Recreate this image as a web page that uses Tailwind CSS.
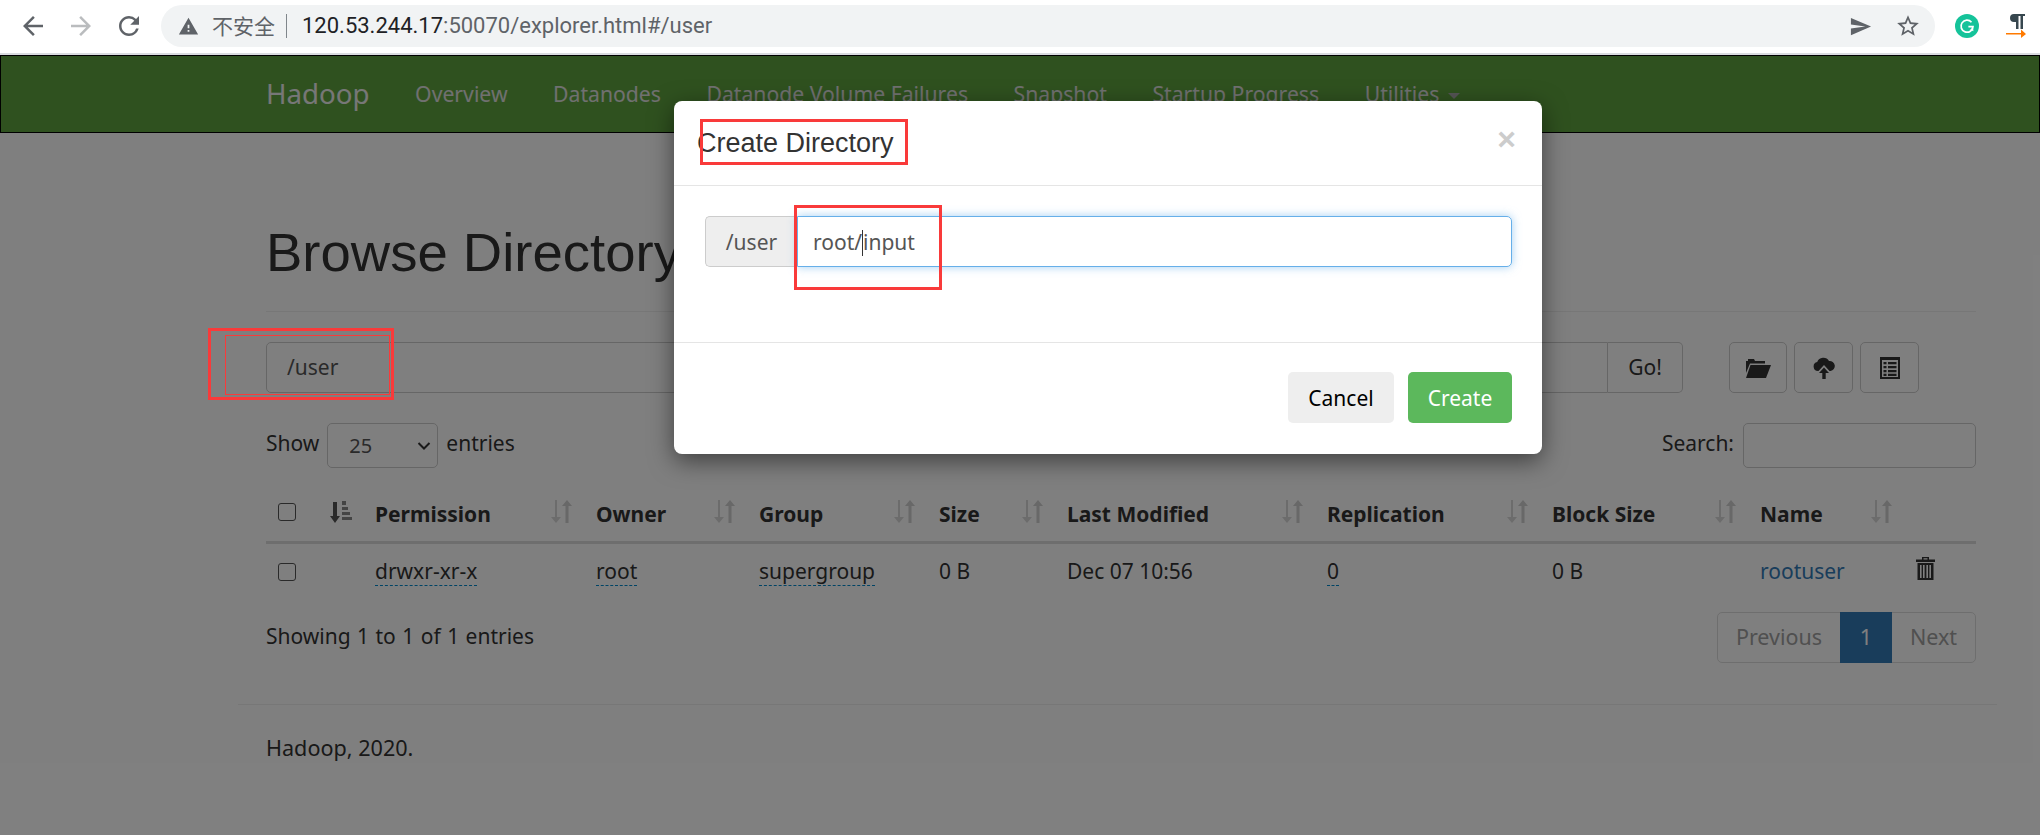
<!DOCTYPE html>
<html lang="en">
  <head>
    <meta charset="UTF-8" />
    <title>Browse Directory</title>
    <script src="https://cdn.jsdelivr.net/npm/@tailwindcss/browser@4"></script>
  </head>
  <body class="bg-white">
    <div class="relative w-[2040px] h-[835px] overflow-hidden font-['Noto_Sans','Noto_Sans_CJK_SC',sans-serif] text-[21px] text-[#333]">
      <!-- browser bar -->
      <div class="h-[55px] bg-white border-b-2 border-[#dadce0] flex items-start pt-[5px]">
        <svg class="w-[30px] h-[30px] ml-[18px] mt-[6px]" viewBox="0 0 24 24" fill="#5f6368"><path d="M20 11H7.83l5.59-5.59L12 4l-8 8 8 8 1.41-1.41L7.83 13H20v-2z"/></svg>
        <svg class="w-[30px] h-[30px] ml-[18px] mt-[6px]" viewBox="0 0 24 24" fill="#babcbe"><path d="M4 11h12.170l-5.590-5.590L12 4l8 8-8 8-1.410-1.410L16.170 13H4v-2z"/></svg>
        <svg class="w-[30px] h-[30px] ml-[18px] mt-[6px]" viewBox="0 0 24 24" fill="#5f6368"><path d="M17.65 6.35A7.958 7.958 0 0 0 12 4c-4.42 0-7.99 3.58-7.99 8s3.57 8 7.99 8c3.73 0 6.84-2.55 7.73-6h-2.08A5.99 5.99 0 0 1 12 18c-3.31 0-6-2.69-6-6s2.69-6 6-6c1.66 0 3.14.69 4.22 1.78L13 11h7V4l-2.35 2.35z"/></svg>
        <div class="ml-[17px] w-[1774px] h-[42px] rounded-full bg-[#f1f3f4] flex items-center pl-[17px]">
          <svg class="w-[21px] h-[21px]" viewBox="0 0 24 24" fill="#5f6368"><path d="M1 21h22L12 2 1 21zm12-3h-2v-2h2v2zm0-4h-2v-4h2v4z"/></svg>
          <span class="ml-[13px] text-[#5f6368] text-[21px] leading-none">不安全</span>
          <span class="ml-[11px] w-px h-[24px] bg-[#80868b]"></span>
          <span class="ml-[15px] text-[22px] leading-none font-['Roboto',sans-serif] text-[#202124]">120.53.244.17<span class="text-[#5f6368]">:50070/explorer.html#/user</span></span>
          <svg class="w-[23px] h-[23px] ml-auto" viewBox="0 0 24 24" fill="#5f6368"><path d="M2.01 21L23 12 2.01 3 2 10l15 2-15 2z"/></svg>
          <svg class="w-[26px] h-[26px] ml-[23px] mr-[14px]" viewBox="0 0 24 24" fill="#5f6368"><path d="M22 9.24l-7.19-.62L12 2 9.19 8.63 2 9.24l5.46 4.73L5.82 21 12 17.27 18.18 21l-1.63-7.03L22 9.24zM12 15.4l-3.76 2.27 1-4.28-3.32-2.88 4.38-.38L12 6.1l1.71 4.04 4.38.38-3.32 2.88 1 4.28L12 15.4z"/></svg>
        </div>
        <svg class="w-[24px] h-[24px] ml-[20px] mt-[9px]" viewBox="0 0 24 24"><circle cx="12" cy="12" r="12" fill="#15c39a"/><path d="M16.5 8.2A6 6 0 1 0 18 12.6h-4.6" fill="none" stroke="#fff" stroke-width="1.7"/><path d="M18.4 17.2l-.3-3.6-3 1.9z" fill="#fff"/></svg>
        <svg class="w-[20px] h-[24px] ml-[27px] mt-[9px]" viewBox="0 0 20 24"><path d="M8 0h11v2h-2v13h-2.500V2h-2v13H10V8H8a4 4 0 0 1 0-8z" fill="#37474f"/><path d="M0 19h15v-3.500l5 4.500-5 4v-3.500H0z" fill="#ff7a00"/></svg>
      </div>

      <!-- page below the browser bar -->
      <div class="relative h-[780px]">
        <nav class="h-[78px] bg-[#5fa33e] border border-black flex items-center pl-[265px] gap-[45.5px] text-[#e0e0e0] text-[21.2px]">
          <span class="text-[27.7px] text-[#eee]">Hadoop</span>
          <span>Overview</span>
          <span>Datanodes</span>
          <span>Datanode Volume Failures</span>
          <span>Snapshot</span>
          <span>Startup Progress</span>
          <span class="flex items-center gap-[9px]">Utilities<span class="mt-[4px] w-0 h-0 border-x-[6px] border-x-transparent border-t-[6px] border-t-[#aaa]"></span></span>
        </nav>

        <main class="w-[1759px] ml-[238px]">
          <div class="pl-[28px] pr-[21px]">
            <div class="mt-[80px] pb-[18px] border-b border-[#eee]">
              <h1 class="h-[80px] leading-[80px] text-[54.5px] font-['Liberation_Sans',sans-serif] whitespace-nowrap">Browse Directory</h1>
            </div>

            <div class="mt-[30px] flex items-start pr-[57px]">
              <div class="flex-1 h-[51px] border border-[#ccc] rounded-l-[5px] flex items-center pl-[20px] text-[#555]">
                <span class="w-[155px]">/user</span>
              </div>
              <div class="w-[75px] h-[51px] border border-l-0 border-[#ccc] rounded-r-[5px] flex items-center justify-center">Go!</div>
              <div class="ml-[46px] flex gap-[7px]">
                <div class="w-[58px] h-[51px] border border-[#ccc] rounded-[5px] flex items-center justify-center">
                  <svg class="w-[26px] h-[20px]" viewBox="0 0 26 20" fill="#333"><path d="M1 3h2V1h6l1 2h10v2.500H5L1 15z"/><path d="M5.500 7H26l-5 13H1z"/></svg>
                </div>
                <div class="w-[59px] h-[51px] border border-[#ccc] rounded-[5px] flex items-center justify-center">
                  <svg class="w-[22px] h-[22px]" viewBox="0 0 22 22" fill="#333"><path d="M5 14a4.500 4.500 0 0 1-.8-8.900A6.500 6.500 0 0 1 16 4a5 5 0 0 1 1.500 10h-1l-5.500-6-5.500 6z"/><path d="M11 10.500l5 5.500h-3.300v6H9.300v-6H6z"/></svg>
                </div>
                <div class="w-[59px] h-[51px] border border-[#ccc] rounded-[5px] flex items-center justify-center">
                  <svg class="w-[20px] h-[22px]" viewBox="0 0 20 22"><path d="M0 0h20v22H0z" fill="#333"/><path d="M2 3h16v17H2z" fill="#fff"/><path d="M3.500 5h3v2.200h-3zM8 5h8.500v2.200H8zM3.500 9h3v2.200h-3zM8 9h8.500v2.200H8zM3.500 13h3v2.200h-3zM8 13h8.500v2.200H8zM3.500 16.800h3V19h-3zM8 16.800h8.500V19H8z" fill="#333"/></svg>
                </div>
              </div>
            </div>

            <div class="mt-[30px] h-[45px] flex items-center">
              <span class="pb-[3px]">Show</span>
              <div class="ml-[8px] w-[111px] h-[45px] border border-[#ccc] rounded-[5px] flex items-center justify-between pl-[21px] pr-[6px] text-[#555]">
                <span class="text-[20px]">25</span>
                <svg class="w-[14px] h-[10px]" viewBox="0 0 14 10" fill="none" stroke="#333" stroke-width="2"><path d="M1.500 2l5.500 5.500L12.500 2"/></svg>
              </div>
              <span class="ml-[8px] pb-[3px]">entries</span>
              <span class="ml-auto mr-[9px] pb-[3px]">Search:</span>
              <div class="w-[233px] h-[45px] border border-[#ccc] rounded-[5px]"></div>
            </div>

            <table class="table-fixed w-[1710px] mt-[12px] border-collapse">
              <colgroup>
                <col class="w-[51px]" /><col class="w-[46px]" /><col class="w-[221px]" /><col class="w-[163px]" /><col class="w-[180px]" /><col class="w-[128px]" /><col class="w-[260px]" /><col class="w-[225px]" /><col class="w-[208px]" /><col class="w-[156px]" /><col class="w-[72px]" />
              </colgroup>
              <thead>
                <tr class="h-[62px] border-b-[3px] border-[#ddd] text-left font-bold">
                  <th class="pl-3 pt-[9px]"><span class="block w-[18px] h-[18px] border border-[#555] rounded-[3px] mb-[5px] bg-white"></span></th>
                  <th class="pl-3 pt-[9px]">
                    <svg class="w-[23px] h-[23px] mb-[4px]" viewBox="0 0 23 23"><path d="M4 1h4v14h3l-5 7-5-7h3z" fill="#555"/><path d="M13 0h4v4h-4zM13 6h6v3h-6zM13 11h8v3h-8zM13 16h10v3H13z" fill="#888"/></svg>
                  </th>
                  <th class="pl-3 pr-3 pt-[9px]"><div class="flex justify-between items-center">Permission
                    <svg class="w-[21px] h-[23px] mb-[6px]" viewBox="0 0 21 23"><path d="M4 0h2v17h4l-5 6-5-6h4z" fill="#d8d8d8"/><path d="M16 0l5 6h-3.500v17h-3V6H11z" fill="#d0d0d0"/></svg>
                  </div></th>
                  <th class="pl-3 pr-3 pt-[9px]"><div class="flex justify-between items-center">Owner
                    <svg class="w-[21px] h-[23px] mb-[6px]" viewBox="0 0 21 23"><path d="M4 0h2v17h4l-5 6-5-6h4z" fill="#d8d8d8"/><path d="M16 0l5 6h-3.500v17h-3V6H11z" fill="#d0d0d0"/></svg>
                  </div></th>
                  <th class="pl-3 pr-3 pt-[9px]"><div class="flex justify-between items-center">Group
                    <svg class="w-[21px] h-[23px] mb-[6px]" viewBox="0 0 21 23"><path d="M4 0h2v17h4l-5 6-5-6h4z" fill="#d8d8d8"/><path d="M16 0l5 6h-3.500v17h-3V6H11z" fill="#d0d0d0"/></svg>
                  </div></th>
                  <th class="pl-3 pr-3 pt-[9px]"><div class="flex justify-between items-center">Size
                    <svg class="w-[21px] h-[23px] mb-[6px]" viewBox="0 0 21 23"><path d="M4 0h2v17h4l-5 6-5-6h4z" fill="#d8d8d8"/><path d="M16 0l5 6h-3.500v17h-3V6H11z" fill="#d0d0d0"/></svg>
                  </div></th>
                  <th class="pl-3 pr-3 pt-[9px]"><div class="flex justify-between items-center">Last Modified
                    <svg class="w-[21px] h-[23px] mb-[6px]" viewBox="0 0 21 23"><path d="M4 0h2v17h4l-5 6-5-6h4z" fill="#d8d8d8"/><path d="M16 0l5 6h-3.500v17h-3V6H11z" fill="#d0d0d0"/></svg>
                  </div></th>
                  <th class="pl-3 pr-3 pt-[9px]"><div class="flex justify-between items-center">Replication
                    <svg class="w-[21px] h-[23px] mb-[6px]" viewBox="0 0 21 23"><path d="M4 0h2v17h4l-5 6-5-6h4z" fill="#d8d8d8"/><path d="M16 0l5 6h-3.500v17h-3V6H11z" fill="#d0d0d0"/></svg>
                  </div></th>
                  <th class="pl-3 pr-3 pt-[9px]"><div class="flex justify-between items-center">Block Size
                    <svg class="w-[21px] h-[23px] mb-[6px]" viewBox="0 0 21 23"><path d="M4 0h2v17h4l-5 6-5-6h4z" fill="#d8d8d8"/><path d="M16 0l5 6h-3.500v17h-3V6H11z" fill="#d0d0d0"/></svg>
                  </div></th>
                  <th class="pl-3 pr-3 pt-[9px]"><div class="flex justify-between items-center">Name
                    <svg class="w-[21px] h-[23px] mb-[6px]" viewBox="0 0 21 23"><path d="M4 0h2v17h4l-5 6-5-6h4z" fill="#d8d8d8"/><path d="M16 0l5 6h-3.500v17h-3V6H11z" fill="#d0d0d0"/></svg>
                  </div></th>
                  <th></th>
                </tr>
              </thead>
              <tbody>
                <tr class="h-[58px]">
                  <td class="pl-3"><span class="block w-[18px] h-[18px] border border-[#555] rounded-[3px] bg-white"></span></td>
                  <td></td>
                  <td class="pl-3"><span class="border-b border-dashed border-[#08c]">drwxr-xr-x</span></td>
                  <td class="pl-3"><span class="border-b border-dashed border-[#08c]">root</span></td>
                  <td class="pl-3"><span class="border-b border-dashed border-[#08c]">supergroup</span></td>
                  <td class="pl-3">0 B</td>
                  <td class="pl-3">Dec 07 10:56</td>
                  <td class="pl-3"><span class="border-b border-dashed border-[#08c]">0</span></td>
                  <td class="pl-3">0 B</td>
                  <td class="pl-3 text-[#337ab7]">rootuser</td>
                  <td class="pl-3">
                    <svg class="w-[19px] h-[23px] mb-[6px]" viewBox="0 0 19 23" fill="#333"><path d="M6 0h7v2.500h6v2.500H0V2.500h6zM7.500 1.200v1.300h4V1.200z"/><path d="M1.500 6h16v17h-16zM4 8v13h1.600V8zM7 8v13h1.600V8zM10.400 8v13H12V8zM13.400 8v13H15V8z"/></svg>
                  </td>
                </tr>
              </tbody>
            </table>

            <div class="mt-[12px] h-[51px] flex items-center justify-between">
              <span class="[word-spacing:1px] pb-[2px]">Showing 1 to 1 of 1 entries</span>
              <div class="flex h-[51px] w-[259px] border border-[#ddd] rounded-[5px] text-[#a0a0a0] text-[21.5px] items-stretch">
                <span class="w-[122px] flex items-center justify-center">Previous</span>
                <span class="w-[52px] -my-px flex items-center justify-center bg-[#337ab7] text-white">1</span>
                <span class="flex-1 flex items-center justify-center">Next</span>
              </div>
            </div>
          </div>

          <div class="mt-[41px] border-t border-[#eee]"></div>
          <p class="mt-[29px] ml-[28px] leading-[28px] text-[21.6px]">Hadoop, 2020.</p>
        </main>

        <!-- modal backdrop -->
        <div class="absolute inset-0 bg-black/50"></div>

        <!-- create directory dialog -->
        <div class="absolute left-[674px] top-[46px] w-[868px] h-[353px] bg-white rounded-[8px] shadow-[0_7px_24px_rgba(0,0,0,0.5)]">
          <div class="h-[85px] border-b border-[#e5e5e5] flex items-center justify-between pl-[23px] pr-[26px]">
            <h4 class="text-[27px] font-['Liberation_Sans',sans-serif]">Create Directory</h4>
            <span class="text-[32px] font-bold text-[#ccc] font-['Liberation_Sans',sans-serif] pb-[8px]">×</span>
          </div>
          <div class="h-[157px] border-b border-[#e5e5e5] pt-[30px] pl-[31px] pr-[30px]">
            <div class="flex h-[51px]">
              <div class="w-[92px] bg-[#eee] border border-r-0 border-[#ccc] rounded-l-[5px] flex items-center justify-center text-[#555] pt-[2px]">/user</div>
              <div class="flex-1 border border-[#66afe9] rounded-r-[5px] shadow-[0_0_10px_rgba(102,175,233,0.6)] flex items-center pl-[15px] text-[#555] pt-[2px]">root/<span class="w-px h-[26px] bg-[#333]"></span>input</div>
            </div>
          </div>
          <div class="flex justify-end gap-[14px] pt-[29px] pr-[30px]">
            <div class="w-[106px] h-[51px] bg-[#eee] rounded-[5px] flex items-center justify-center text-black pt-[2px]">Cancel</div>
            <div class="w-[104px] h-[51px] bg-[#5cb85c] rounded-[5px] flex items-center justify-center text-white pt-[2px]">Create</div>
          </div>
        </div>
      </div>

      <!-- red annotation boxes -->
      <div class="absolute left-[700px] top-[119px] w-[208px] h-[46px] border-[3px] border-[#f93a3a]"></div>
      <div class="absolute left-[794px] top-[205px] w-[148px] h-[85px] border-[3px] border-[#f93a3a]"></div>
      <div class="absolute left-[208px] top-[328px] w-[186px] h-[72px] border-[3px] border-[#f93a3a]"></div>
      <div class="absolute left-[225px] top-[335px] w-[165px] h-[60px] border border-[#f93a3a]"></div>
    </div>
  </body>
</html>
